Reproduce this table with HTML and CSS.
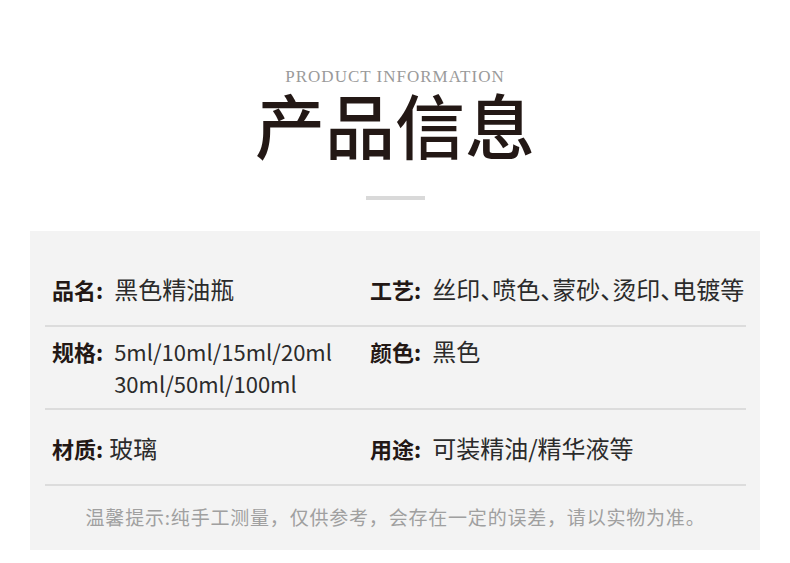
FILE: index.html
```html
<!DOCTYPE html>
<html lang="zh-CN">
<head>
    <meta charset="UTF-8">
    <meta name="viewport" content="width=device-width, initial-scale=1.0">
    <title>产品信息</title>
    <link rel="stylesheet" href="styles.css">
</head>
<body>
    <div class="header">
        <div class="subtitle">PRODUCT INFORMATION</div>
        <h1 class="title">产品信息</h1>
        <div class="title-bar"></div>
    </div>

    <div class="info-panel">
        <div class="info-row">
            <div class="info-item">
                <span class="info-label">品名:</span>
                <span class="info-value">黑色精油瓶</span>
            </div>
            <div class="info-item">
                <span class="info-label">工艺:</span>
                <span class="info-value">丝印、喷色、蒙砂、烫印、电镀等</span>
            </div>
        </div>
        <div class="info-row info-row-multi">
            <div class="info-item">
                <span class="info-label">规格:</span>
                <span class="info-value info-value-small">5ml/10ml/15ml/20ml<br>30ml/50ml/100ml</span>
            </div>
            <div class="info-item">
                <span class="info-label">颜色:</span>
                <span class="info-value">黑色</span>
            </div>
        </div>
        <div class="info-row">
            <div class="info-item info-item-tight">
                <span class="info-label">材质:</span>
                <span class="info-value">玻璃</span>
            </div>
            <div class="info-item">
                <span class="info-label">用途:</span>
                <span class="info-value">可装精油/精华液等</span>
            </div>
        </div>
        <!-- footnote -->
        <p class="info-note">温馨提示:纯手工测量，仅供参考，会存在一定的误差，请以实物为准。</p>
    </div>
</body>
</html>
```

FILE: styles.css
```css
body {
    margin: 0;
    background-color: #fff;
    font-family: "Noto Sans CJK SC", "Noto Sans", sans-serif;
    color: #231815;
}

.header {
    display: flex;
    flex-direction: column;
    align-items: center;
    padding-top: 67px;
}
.subtitle {
    font-family: "Liberation Serif", "Noto Sans CJK SC", serif;
    font-size: 17px;
    line-height: 20px;
    letter-spacing: 1px;
    color: #9a9a9a;
}
.title {
    margin: 2px 0 0;
    font-size: 70px;
    line-height: 70px;
    font-weight: 500;
    color: #231815;
}
.title-bar {
    width: 59px;
    height: 4px;
    margin-top: 37px;
    background-color: #d9d9d9;
}

.info-panel {
    margin: 31px 30px 0 30px;
    padding: 20px 14px 19px 15px;
    background-color: #f3f3f3;
}
.info-row {
    display: grid;
    grid-template-columns: 318px 1fr;
    padding: 22px 0 20px 7px;
    border-bottom: 2px solid #dcdcdc;
}
.info-row-multi {
    padding-top: 8px;
    padding-bottom: 9px;
}
.info-item {
    display: flex;
    align-items: flex-start;
    gap: 11px;
    font-size: 22px;
    line-height: 32px;
}
.info-item-tight {
    gap: 6px;
}
.info-label {
    font-weight: 700;
    white-space: nowrap;
    color: #231815;
}
.info-value {
    font-size: 24px;
    color: #2b2b2b;
    font-feature-settings: "halt";
    white-space: nowrap;
}
.info-value-small {
    font-size: 22px;
}

/* footnote under the table */
.info-note {
    margin: 17px 0 0;
    text-align: center;
    font-size: 19px;
    line-height: 28px;
    letter-spacing: 0.8px;
    color: #a0a0a0;
}
```
